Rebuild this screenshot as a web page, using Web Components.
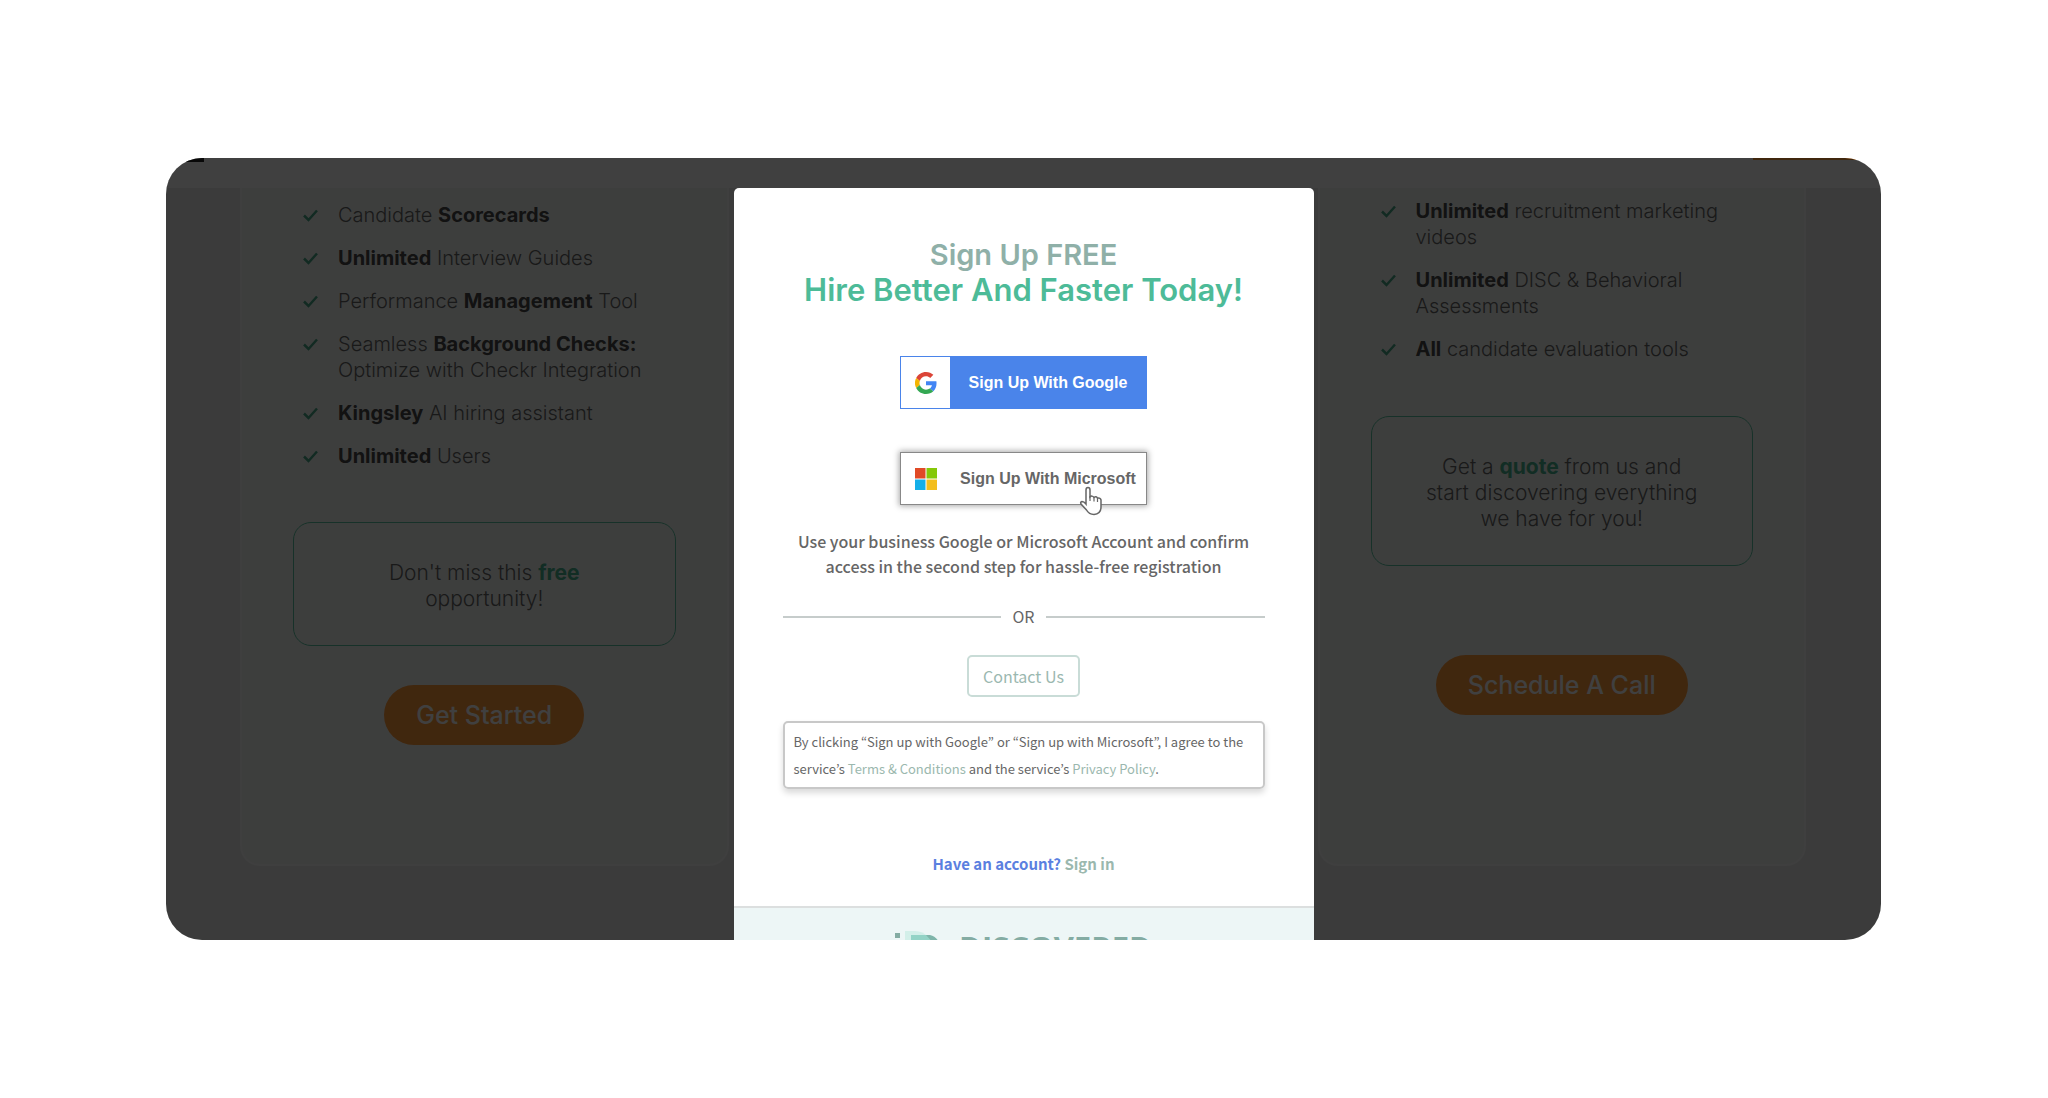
<!DOCTYPE html>
<html lang="en">
<head>
<meta charset="utf-8">
<title>Sign Up FREE</title>
<style>
	body{
		margin:0;
		background:#fff;
		font-family:Inter,"Open Sans",sans-serif;
	}
</style>
</head>
<body>
<pricing-stage>
	<plan-card>
		<plan-feature slot="features">Candidate <b>Scorecards</b></plan-feature>
		<plan-feature slot="features"><b>Unlimited</b> Interview Guides</plan-feature>
		<plan-feature slot="features">Performance <b>Management</b> Tool</plan-feature>
		<plan-feature slot="features">Seamless <b>Background Checks:</b><br>Optimize with Checkr Integration</plan-feature>
		<plan-feature slot="features"><b>Kingsley</b> AI hiring assistant</plan-feature>
		<plan-feature slot="features"><b>Unlimited</b> Users</plan-feature>
		<span slot="callout">Don't miss this <strong>free</strong><br>opportunity!</span>
		<span slot="action">Get Started</span>
	</plan-card>
	<plan-card class="tall">
		<plan-feature slot="features"><b>Unlimited</b> recruitment marketing<br>videos</plan-feature>
		<plan-feature slot="features"><b>Unlimited</b> DISC &amp; Behavioral<br>Assessments</plan-feature>
		<plan-feature slot="features"><b>All</b> candidate evaluation tools</plan-feature>
		<span slot="callout">Get a <strong>quote</strong> from us and<br>start discovering everything<br>we have for you!</span>
		<span slot="action">Schedule A Call</span>
	</plan-card>
	<sign-up-dialog slot="dialog"></sign-up-dialog>
</pricing-stage>

<template id="stage-template">
	<style>
		:host{
			display:flex;
			align-items:center;
			box-sizing:border-box;
			min-height:100vh;
			padding:0 167px 0 166px;
		}
		.frame{
			position:relative;
			flex:1;
			overflow:hidden;
			border-radius:36px;
			background:#eaecea;
		}
		header{
			display:flex;
			justify-content:space-between;
			height:30px;
			background:#fff;
		}
		.menu{
			width:38px;
			height:4px;
			background:#222;
		}
		.cta{
			width:128px;
			height:2px;
			background:#ff9a38;
		}
		main{
			display:grid;
			grid-template-columns:5fr 5fr;
			column-gap:589px;
			padding:0 75px 74px 74px;
		}
		.backdrop{
			position:absolute;
			inset:0;
			background:rgba(0,0,0,.75);
		}
	</style>
	<div class="frame">
		<header><div class="menu"></div><div class="cta"></div></header>
		<main><slot></slot></main>
		<div class="backdrop"></div>
		<slot name="dialog"></slot>
	</div>
</template>

<template id="card-template">
	<style>
		:host{
			display:block;
			box-sizing:border-box;
			padding:14px 51px 119px;
			border:2px solid #f9f9f9;
			border-top:0;
			border-radius:0 0 20px 20px;
			background:#f4f6f4;
			font-size:20px;
			line-height:26px;
			font-weight:300;
			color:#666;
		}
		:host(.tall){
			padding-top:10px;
		}
		.features{
			display:flex;
			flex-direction:column;
			gap:17px;
			padding-left:10px;
			margin-bottom:53px;
		}
		:host(.tall) .features{
			margin-bottom:54px;
		}
		.callout{
			padding:37px 20px 33px;
			border:1px solid #5cc4a2;
			border-radius:18px;
			font-size:21px;
			text-align:center;
		}
		::slotted(span){
			white-space:nowrap;
		}
		.action{
			display:flex;
			justify-content:center;
			margin-top:39px;
		}
		:host(.tall) .action{
			margin-top:89px;
		}
		button{
			height:60px;
			padding:0 32px;
			border:0;
			border-radius:30px;
			background:#ff9a38;
			color:#fff;
			font:500 25px/30px Inter,"Open Sans",sans-serif;
		}
	</style>
	<div class="features"><slot name="features"></slot></div>
	<div class="callout"><slot name="callout"></slot></div>
	<div class="action"><button type="button"><slot name="action"></slot></button></div>
</template>

<template id="feature-template">
	<style>
		:host{
			display:flex;
			gap:20px;
			white-space:nowrap;
		}
		svg{
			flex:none;
			width:15px;
			height:26px;
			fill:none;
			stroke:#49a988;
			stroke-width:2.500;
		}
		::slotted(b){
			font-weight:700;
			color:#484848;
		}
	</style>
	<svg viewBox="0 0 15 26"><path d="M1 13.500l4.500 4.500L14 8.500"/></svg>
	<div><slot></slot></div>
</template>

<template id="dialog-template">
	<style>
		:host{
			position:absolute;
			top:30px;
			bottom:0;
			left:0;
			right:0;
			width:580px;
			margin:0 auto;
			overflow:hidden;
			border-radius:5px 5px 0 0;
			background:#fff;
			color:#666;
			text-align:center;
			font-family:"Noto Sans CJK KR","Open Sans",sans-serif;
			font-size:16px;
			line-height:25px;
		}
		a{
			color:#9bb8ae;
			text-decoration:none;
		}
		.content{
			display:flex;
			flex-direction:column;
			align-items:center;
			padding:49px 49px 30px;
		}
		h1{
			margin:0 0 49px;
			color:#8fb0a8;
			font:600 29px/35px Inter,"Open Sans",sans-serif;
		}
		h1 em{
			display:block;
			color:#4dbb98;
			font-size:31px;
			font-style:normal;
		}
		.hint{
			margin:24px 0 25px;
			font-weight:500;
		}
		.or{
			display:flex;
			align-items:center;
			align-self:stretch;
			gap:11px;
			margin-bottom:26px;
		}
		.or::before,.or::after{
			content:"";
			flex:1;
			height:2px;
			background:#c6cccb;
		}
		.contact{
			box-sizing:border-box;
			height:42px;
			margin-bottom:24px;
			padding:0 14px;
			border:2px solid #c9dcd7;
			border-radius:5px;
			background:#fff;
			color:#9bb8b0;
			font:inherit;
		}
		.terms{
			align-self:stretch;
			margin:0 0 62px;
			padding:5px 9px;
			border:2px solid #c8c8c8;
			border-radius:5px;
			box-shadow:0 4px 6px rgba(0,0,0,.15);
			font-size:13px;
			line-height:27px;
			text-align:left;
			white-space:nowrap;
		}
		.account{
			margin:0;
			color:#5b80e0;
			font-size:15px;
			font-weight:700;
		}
		footer{
			display:flex;
			justify-content:center;
			gap:18px;
			height:60px;
			padding-top:21px;
			border-top:2px solid #dcdfdf;
			background:#edf6f6;
			color:#84aca3;
			font:700 31px/36px "Open Sans",sans-serif;
		}
		footer svg{
			width:46px;
			height:40px;
		}
	</style>
	<div class="content">
		<h1>Sign Up FREE<em>Hire Better And Faster Today!</em></h1>
		<provider-button brand="google">Sign Up With Google</provider-button>
		<provider-button brand="microsoft">Sign Up With Microsoft</provider-button>
		<p class="hint">Use your business Google or Microsoft Account and confirm<br>access in the second step for hassle-free registration</p>
		<div class="or">OR</div>
		<button class="contact" type="button">Contact Us</button>
		<p class="terms">By clicking “Sign up with Google” or “Sign up with Microsoft”, I agree to the<br>service’s <a href="#terms">Terms &amp; Conditions</a> and the service’s <a href="#privacy">Privacy Policy</a>.</p>
		<p class="account">Have an account? <a href="#signin">Sign in</a></p>
	</div>
	<footer>
		<svg viewBox="0 0 46 40">
			<rect x="0" y="4" width="5" height="5" fill="#84aca3"/>
			<path d="M10 2h10q8 0 13 6v32H10z" fill="#d3efe9"/>
			<path d="M16 6h18l8 10v24H16z" fill="#93d3c6"/>
			<path d="M31 6h4q9 2 11 14v20h-6V16z" fill="#7fb5aa"/>
		</svg>
		<span>DISCOVERED</span>
	</footer>
</template>

<template id="provider-template">
	<style>
		:host{
			position:relative;
			display:block;
		}
		button{
			display:flex;
			align-items:center;
			box-sizing:border-box;
			width:247px;
			height:53px;
			padding:0;
			border:1px solid #4a84ea;
			background:#4a84ea;
			color:#fff;
			font:700 16px/20px "Liberation Sans",Arial,sans-serif;
			white-space:nowrap;
		}
		.icon{
			display:flex;
			align-items:center;
			justify-content:center;
			width:49px;
			height:51px;
			background:#fff;
		}
		.icon svg{
			width:22px;
			height:22px;
		}
		.label{
			flex:1;
			text-align:center;
		}
		.pointer{
			display:none;
		}
		:host([brand=microsoft]){
			margin-top:43px;
		}
		:host([brand=microsoft]) button{
			border-color:#888;
			background:#fff;
			color:#666;
			box-shadow:0 0 6px 1px rgba(0,0,0,.35);
		}
		:host([brand=microsoft]) .pointer{
			display:block;
			position:absolute;
			left:179px;
			top:34px;
			width:24px;
			height:30px;
		}
	</style>
	<button type="button">
		<span class="icon"></span>
		<span class="label"><slot></slot></span>
	</button>
	<svg class="pointer" viewBox="0 0 24 30">
		<path d="M7 18V4q0-2.500 2-2.500T11 4v7q2-2 4 .5 2-1.500 3.500.5 3-.5 3.500 2v7q0 7-7 7.500-5 0-7.500-4.500L2 18q-1-2 1-2.500 2 0 4 2.500z" fill="#fff" stroke="#666" stroke-width="1.500"/>
		<path d="M11 10v5M15 11.500v4M18.500 12v4" stroke="#666" stroke-width="1.200"/>
	</svg>
</template>

<script>
const icons = {
	google:`<svg viewBox="0 0 48 48">
		<path fill="#db4437" d="M24 9.500c3.540 0 6.710 1.220 9.210 3.600l6.850-6.850C35.900 2.380 30.470 0 24 0 14.620 0 6.510 5.380 2.560 13.220l7.980 6.190C12.430 13.720 17.740 9.500 24 9.500z"/>
		<path fill="#4285f4" d="M46.980 24.550c0-1.570-.15-3.090-.38-4.550H24v9.020h12.940c-.58 2.960-2.260 5.480-4.780 7.180l7.730 6c4.510-4.180 7.090-10.360 7.090-17.650z"/>
		<path fill="#f4b400" d="M10.530 28.590A14.500 14.500 0 0 1 10.530 19.410l-7.980-6.190a24 24 0 0 0 0 21.560z"/>
		<path fill="#34a853" d="M24 48c6.480 0 11.930-2.130 15.890-5.810l-7.730-6c-2.150 1.450-4.920 2.300-8.160 2.300-6.260 0-11.570-4.220-13.470-9.910l-7.980 6.190C6.510 42.620 14.620 48 24 48z"/>
	</svg>`,
	microsoft:`<svg viewBox="0 0 22 22">
		<path fill="#e04a26" d="M0 0h10.500v10.500H0z"/>
		<path fill="#85c808" d="M11.500 0H22v10.500H11.500z"/>
		<path fill="#14afe8" d="M0 11.500h10.500V22H0z"/>
		<path fill="#f3be1d" d="M11.500 11.500H22V22H11.500z"/>
	</svg>`
}
class ShadowElement extends HTMLElement{
	constructor(templateId){
		super();
		this._shadowRoot = this.attachShadow({mode:"open"});
		this._shadowRoot.appendChild(document.getElementById(templateId).content.cloneNode(true));
	}
}
class PricingStage extends ShadowElement{
	constructor(){
		super("stage-template");
	}
}
class PlanCard extends ShadowElement{
	constructor(){
		super("card-template");
	}
	connectedCallback(){
		// the highlighted word sits inside the slotted text, out of ::slotted's reach
		this.querySelectorAll("strong").forEach(word => {
			word.style.fontWeight = 700;
			word.style.color = "#49b48f";
		});
	}
}
class PlanFeature extends ShadowElement{
	constructor(){
		super("feature-template");
	}
}
class ProviderButton extends ShadowElement{
	constructor(){
		super("provider-template");
		this.$icon = this._shadowRoot.querySelector(".icon");
	}
	connectedCallback(){
		this.$icon.innerHTML = icons[this.getAttribute("brand")];
	}
}
class SignUpDialog extends ShadowElement{
	constructor(){
		super("dialog-template");
	}
}
customElements.define("pricing-stage",PricingStage);
customElements.define("plan-card",PlanCard);
customElements.define("plan-feature",PlanFeature);
customElements.define("provider-button",ProviderButton);
customElements.define("sign-up-dialog",SignUpDialog);
</script>
</body>
</html>
